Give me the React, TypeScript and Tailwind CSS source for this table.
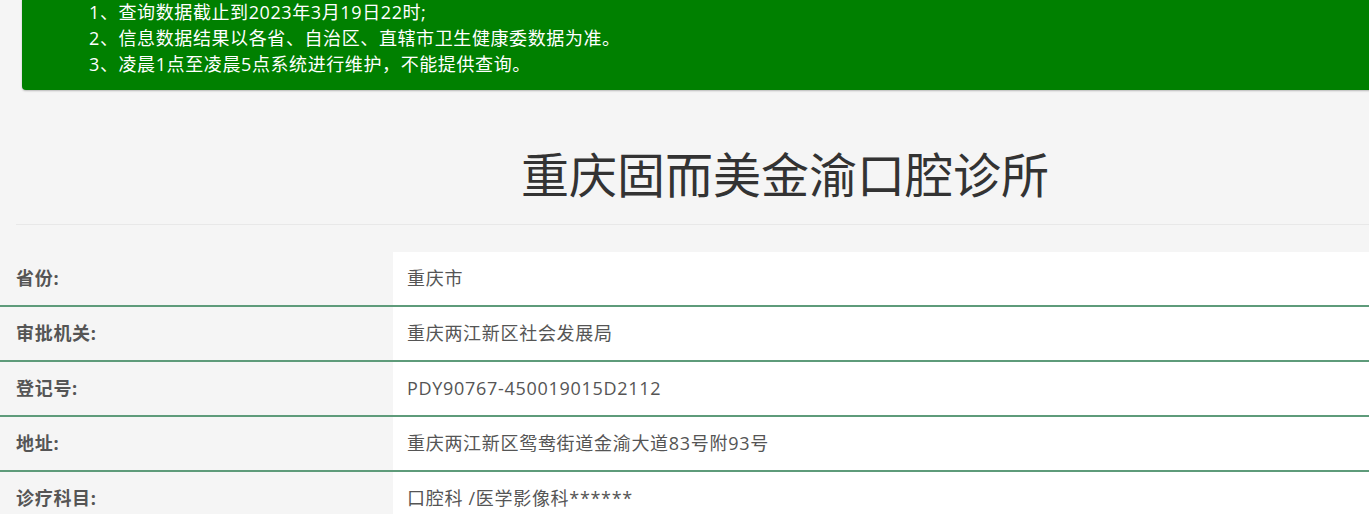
import React from "react";

const NOTICES = [
  "1、查询数据截止到2023年3月19日22时;",
  "2、信息数据结果以各省、自治区、直辖市卫生健康委数据为准。",
  "3、凌晨1点至凌晨5点系统进行维护，不能提供查询。",
];

const ROWS: ReadonlyArray<{ label: string; value: string }> = [
  { label: "省份:", value: "重庆市" },
  { label: "审批机关:", value: "重庆两江新区社会发展局" },
  { label: "登记号:", value: "PDY90767-450019015D2112" },
  { label: "地址:", value: "重庆两江新区鸳鸯街道金渝大道83号附93号" },
  { label: "诊疗科目:", value: "口腔科 /医学影像科******" },
];

export default function App() {
  return (
    <div className="h-[514px] w-full overflow-hidden bg-[#f5f5f5] font-['Open_Sans','Noto_Sans_CJK_SC',sans-serif]">
      <div className="w-[1570px]">
        <div className="-mt-px ml-[22px] rounded-b bg-[#008000] pb-[13px] pl-[67px] shadow-[0_1px_2px_rgba(0,0,0,0.25)]">
          {NOTICES.map((line) => (
            <p
              key={line}
              className="text-[18px] leading-[26px] tracking-[0.6px] text-white"
            >
              {line}
            </p>
          ))}
        </div>

        <div className="ml-4 mt-[58px] w-[1538px] border-b border-[#e8e8e8] pb-[22px] text-center">
          <h1 className="text-[48px] leading-[54px] font-normal text-[#333]">
            重庆固而美金渝口腔诊所
          </h1>
        </div>

        <div className="mt-[27px]">
          {ROWS.map((row) => (
            <div
              key={row.label}
              className="flex h-[55px] border-b-2 border-[#5e9b7a] tracking-[0.7px]"
            >
              <div className="flex w-[393px] items-center pl-4 text-[18px] font-bold text-[#555]">
                {row.label}
              </div>
              <div className="flex flex-1 items-center bg-white pl-[14px] text-[18px] text-[#555]">
                {row.value}
              </div>
            </div>
          ))}
        </div>
      </div>
    </div>
  );
}
